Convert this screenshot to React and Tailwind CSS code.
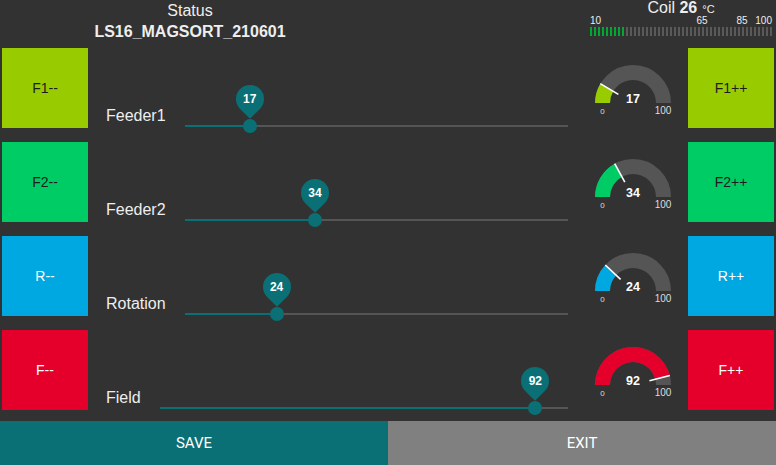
import React from 'react';

const rows = [
  { down: 'F1--', up: 'F1++', label: 'Feeder1', value: 17, bg: 'bg-[#99cc00]', hex: '#99cc00', text: 'text-[#1c1c1c]' },
  { down: 'F2--', up: 'F2++', label: 'Feeder2', value: 34, bg: 'bg-[#00cc66]', hex: '#00cc66', text: 'text-[#1c1c1c]' },
  { down: 'R--', up: 'R++', label: 'Rotation', value: 24, bg: 'bg-[#00a8e1]', hex: '#00a8e1', text: 'text-white' },
  { down: 'F--', up: 'F++', label: 'Field', value: 92, bg: 'bg-[#e4002b]', hex: '#e4002b', text: 'text-white' },
];

const coil = 26;
const bars = Array.from({ length: 46 }, (_, i) => i);

const Gauge = ({ value, color }) => {
  const cx = 45;
  const cy = 55;
  const r = 30.5;
  const a = Math.PI * (1 - value / 100);
  const px = (rr) => cx + rr * Math.cos(a);
  const py = (rr) => cy - rr * Math.sin(a);
  return (
    <svg width="90" height="80" viewBox="0 0 90 80" className="shrink-0 ml-[20px] mr-[10px]">
      <path d={`M ${cx - r} ${cy} A ${r} ${r} 0 0 1 ${cx + r} ${cy}`} fill="none" stroke="#555555" strokeWidth="15" />
      <path d={`M ${cx - r} ${cy} A ${r} ${r} 0 0 1 ${px(r)} ${py(r)}`} fill="none" stroke={color} strokeWidth="15" />
      <line x1={px(17)} y1={py(17)} x2={px(38)} y2={py(38)} stroke="#ffffff" strokeWidth="1.6" />
      <text x={cx} y={cy} textAnchor="middle" fill="#ffffff" fontSize="12.5" fontWeight="bold" fontFamily="Liberation Sans, Arial, sans-serif">
        {value}
      </text>
      <text x={cx - 30.5} y={cy + 10.5} textAnchor="middle" fill="#dddddd" fontSize="8" fontFamily="Liberation Sans, Arial, sans-serif">
        0
      </text>
      <text x={cx + 30} y={cy + 10.5} textAnchor="middle" fill="#dddddd" fontSize="10" fontFamily="Liberation Sans, Arial, sans-serif">
        100
      </text>
    </svg>
  );
};

const Slider = ({ value }) => (
  <div className="relative flex-1 h-[2px] self-end mb-[1px] ml-[19px] bg-[#555555]">
    <div className="h-full bg-[#0a7075]" style={{ width: `${value}%` }} />
    <div className="absolute top-1/2" style={{ left: `${value}%` }}>
      <div className="absolute w-[14px] h-[14px] -translate-x-1/2 -translate-y-1/2 rounded-full bg-[#0a7075]" />
      <div className="absolute top-[-41.5px] w-7 h-7 -translate-x-1/2">
        <div className="w-7 h-7 rounded-[50%_50%_50%_0] rotate-[-45deg] bg-[#0a7075]" />
        <div className="absolute inset-0 flex items-center justify-center text-[12px] font-bold text-white">{value}</div>
      </div>
    </div>
  </div>
);

export default function App() {
  return (
    <div className="w-[776px] h-[465px] bg-[#323232] flex flex-col overflow-hidden font-['Liberation_Sans',Arial,sans-serif] text-[#eeeeee]">
      {/* header */}
      <div className="h-[48px] flex shrink-0">
        <div className="w-[380px] flex flex-col items-center pt-[2px]">
          <div className="text-[16px] leading-[18px]">Status</div>
          <div className="text-[16px] leading-[18px] font-bold mt-[3px]">LS16_MAGSORT_210601</div>
        </div>
        <div className="ml-auto mr-[4px] w-[182px] flex flex-col">
          <div className="h-[16px] leading-[16px] text-center whitespace-nowrap">
            <span className="text-[16px]">Coil </span>
            <span className="text-[16px] font-bold">{coil}</span>
            <span className="text-[11px] ml-[5px]">°C</span>
          </div>
          <div className="relative h-[10px] text-[10px] leading-[10px]">
            <span className="absolute left-0">10</span>
            <span className="absolute left-[112px] -translate-x-1/2">65</span>
            <span className="absolute left-[152px] -translate-x-1/2">85</span>
            <span className="absolute right-0">100</span>
          </div>
          <div className="mt-[1px] h-[9px] flex justify-between">
            {bars.map((i) => (
              <div key={i} className={`w-[2px] h-full ${i < 9 ? 'bg-[#00a832]' : 'bg-[#5a5a5a]'}`} />
            ))}
          </div>
        </div>
      </div>

      {/* control rows */}
      <div className="flex flex-col gap-[14px] px-[2px]">
        {rows.map((r) => (
          <div key={r.label} className="h-[80px] flex">
            <div className={`w-[86px] h-full shrink-0 flex items-center justify-center text-[14px] ${r.bg} ${r.text}`}>{r.down}</div>
            <div className="flex-1 flex pl-[18px]">
              <div className="self-end mb-[4px] text-[16px] leading-[16px] text-[#eeeeee]">{r.label}</div>
              <Slider value={r.value} />
              <Gauge value={r.value} color={r.hex} />
            </div>
            <div className={`w-[86px] h-full shrink-0 flex items-center justify-center text-[14px] ${r.bg} ${r.text}`}>{r.up}</div>
          </div>
        ))}
      </div>

      {/* footer */}
      <div className="mt-[11px] h-[44px] flex shrink-0 font-['Roboto',sans-serif] text-[15px] text-white">
        <div className="w-[388px] flex items-center justify-center bg-[#0a7075]">SAVE</div>
        <div className="flex-1 flex items-center justify-center bg-[#808080]">EXIT</div>
      </div>
    </div>
  );
}
